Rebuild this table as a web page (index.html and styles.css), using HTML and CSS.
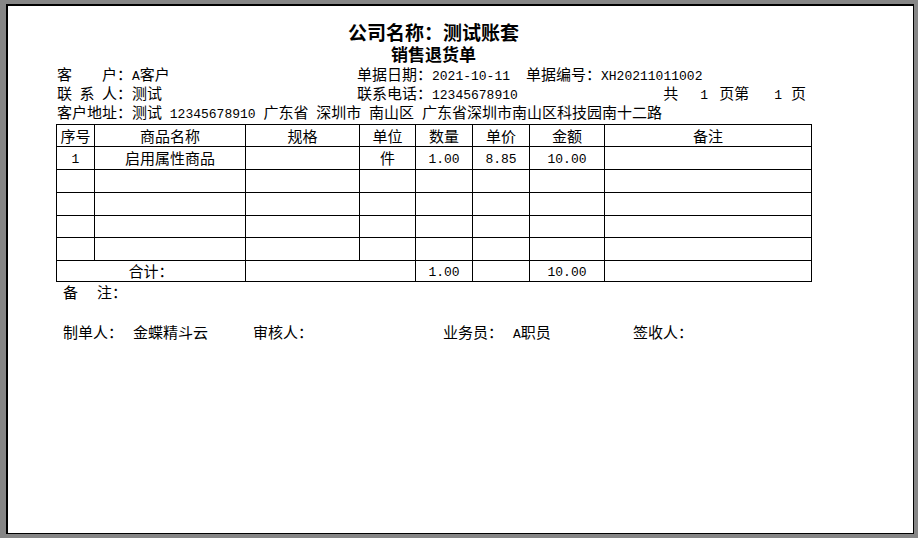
FILE: index.html
```html
<!DOCTYPE html>
<html lang="zh-CN">
<head>
<meta charset="utf-8">
<title>销售退货单</title>
<link rel="stylesheet" href="styles.css">
</head>
<body>
<div class="page">
  <div class="sheet">
    <h1 class="title">公司名称：测试账套</h1>
    <h2 class="subtitle">销售退货单</h2>
    <div class="info-row">
      <div class="c1"><span class="lbl">客户</span>：<span class="en">A</span>客户</div>
      <div class="c2">单据日期：<span class="en">2021-10-11</span></div>
      <div class="c3">单据编号：<span class="en">XH20211011002</span></div>
    </div>
    <div class="info-row">
      <div class="c1"><span class="lbl">联系人</span>：测试</div>
      <div class="c2">联系电话：<span class="en">12345678910</span></div>
      <div class="pages">共<span class="en pg pg1">1</span>页第<span class="en pg pg2">1</span>页</div>
    </div>
    <p class="addr">客户地址：测试<span class="en"> 12345678910 </span>广东省<span class="en"> </span>深圳市<span class="en"> </span>南山区<span class="en"> </span>广东省深圳市南山区科技园南十二路</p>
    <table class="grid">
      <colgroup>
        <col class="w-no"><col class="w-name"><col class="w-spec"><col class="w-unit"><col class="w-qty"><col class="w-price"><col class="w-amt"><col class="w-note">
      </colgroup>
      <thead>
        <tr class="head"><th>序号</th><th>商品名称</th><th>规格</th><th>单位</th><th>数量</th><th>单价</th><th>金额</th><th>备注</th></tr>
      </thead>
      <tbody>
        <tr><td class="num">1</td><td>启用属性商品</td><td></td><td>件</td><td class="num">1.00</td><td class="num">8.85</td><td class="num">10.00</td><td></td></tr>
        <tr><td></td><td></td><td></td><td></td><td></td><td></td><td></td><td></td></tr>
        <tr><td></td><td></td><td></td><td></td><td></td><td></td><td></td><td></td></tr>
        <tr class="short"><td></td><td></td><td></td><td></td><td></td><td></td><td></td><td></td></tr>
        <tr><td></td><td></td><td></td><td></td><td></td><td></td><td></td><td></td></tr>
        <tr class="total"><td colspan="2">合计：</td><td colspan="2"></td><td class="num">1.00</td><td></td><td class="num">10.00</td><td></td></tr>
      </tbody>
    </table>
    <div class="remark">备<span class="sp"></span>注：</div>
    <div class="signs">
      <div class="sign"><span class="sl">制单人：</span>金蝶精斗云</div>
      <div class="sign"><span class="sl">审核人：</span></div>
      <div class="sign"><span class="sl">业务员：</span><span class="en">A</span>职员</div>
      <div class="sign"><span class="sl">签收人：</span></div>
    </div>
  </div>
</div>
</body>
</html>
```

FILE: styles.css
```css
html, body {
  margin: 0;
  padding: 0;
}
body {
  background: #868686;
  width: 918px;
  height: 538px;
  overflow: hidden;
  font-family: "Noto Sans CJK SC", sans-serif;
  font-size: 15px;
  color: #000;
}
.page {
  box-sizing: border-box;
  margin: 4px 4px 4px 6px;
  width: 908px;
  height: 530px;
  background: #fff;
  border-left: 2px solid #000;
  border-top: 2px solid #000;
  border-right: 1px solid #000;
  border-bottom: 1px solid #000;
}
.sheet {
  width: 755px;
  margin-left: 48px;
  padding-top: 15px;
}
.title {
  margin: 0;
  font-size: 19px;
  font-weight: bold;
  line-height: 22px;
  height: 22px;
  text-align: center;
}
.subtitle {
  margin: 0;
  font-size: 17px;
  font-weight: bold;
  line-height: 21px;
  height: 21px;
  text-align: center;
}
.en, .num {
  font-family: "Liberation Mono", monospace;
  font-size: 13px;
  white-space: pre;
}
.en {
  line-height: 1;
}
.info-row {
  display: flex;
  line-height: 19px;
  height: 19px;
  padding-left: 1px;
  white-space: nowrap;
}
.info-row .c1 {
  width: 300px;
}
.info-row .c2 {
  width: 169px;
}
.lbl {
  display: inline-block;
  width: 60px;
  line-height: 1;
  text-align: justify;
  text-align-last: justify;
}
.pages {
  margin-left: auto;
  padding-right: 5px;
}
.pg1 {
  padding-left: 22px;
  padding-right: 11px;
}
.pg2 {
  padding-left: 25px;
  padding-right: 9px;
}
.addr {
  margin: 0 0 2px;
  padding-left: 1px;
  line-height: 20px;
  height: 20px;
  white-space: nowrap;
}
.grid {
  width: 755px;
  table-layout: fixed;
  border-collapse: collapse;
}
.grid th, .grid td {
  border: 1px solid #000;
  padding: 0;
  text-align: center;
  font-weight: normal;
  line-height: 16px;
  height: 22px;
}
.grid td.num {
  padding-top: 3px;
  height: 19px;
}
.grid tr.head th {
  height: 21px;
}
.grid tr.short td {
  height: 21px;
}
.grid tr.total td {
  height: 20px;
}
.grid tr.total td.num {
  height: 17px;
}
.w-no { width: 38px; }
.w-name { width: 151px; }
.w-spec { width: 114px; }
.w-unit { width: 56px; }
.w-qty { width: 57px; }
.w-price { width: 57px; }
.w-amt { width: 75px; }
.w-note { width: 207px; }
.remark {
  padding-left: 7px;
  line-height: 19px;
  height: 19px;
}
.sp {
  display: inline-block;
  width: 19px;
}
.signs {
  display: grid;
  grid-template-columns: repeat(4, 190px);
  padding-left: 7px;
  margin-top: 21px;
  line-height: 20px;
}
.sl {
  display: inline-block;
  width: 70px;
}
```
